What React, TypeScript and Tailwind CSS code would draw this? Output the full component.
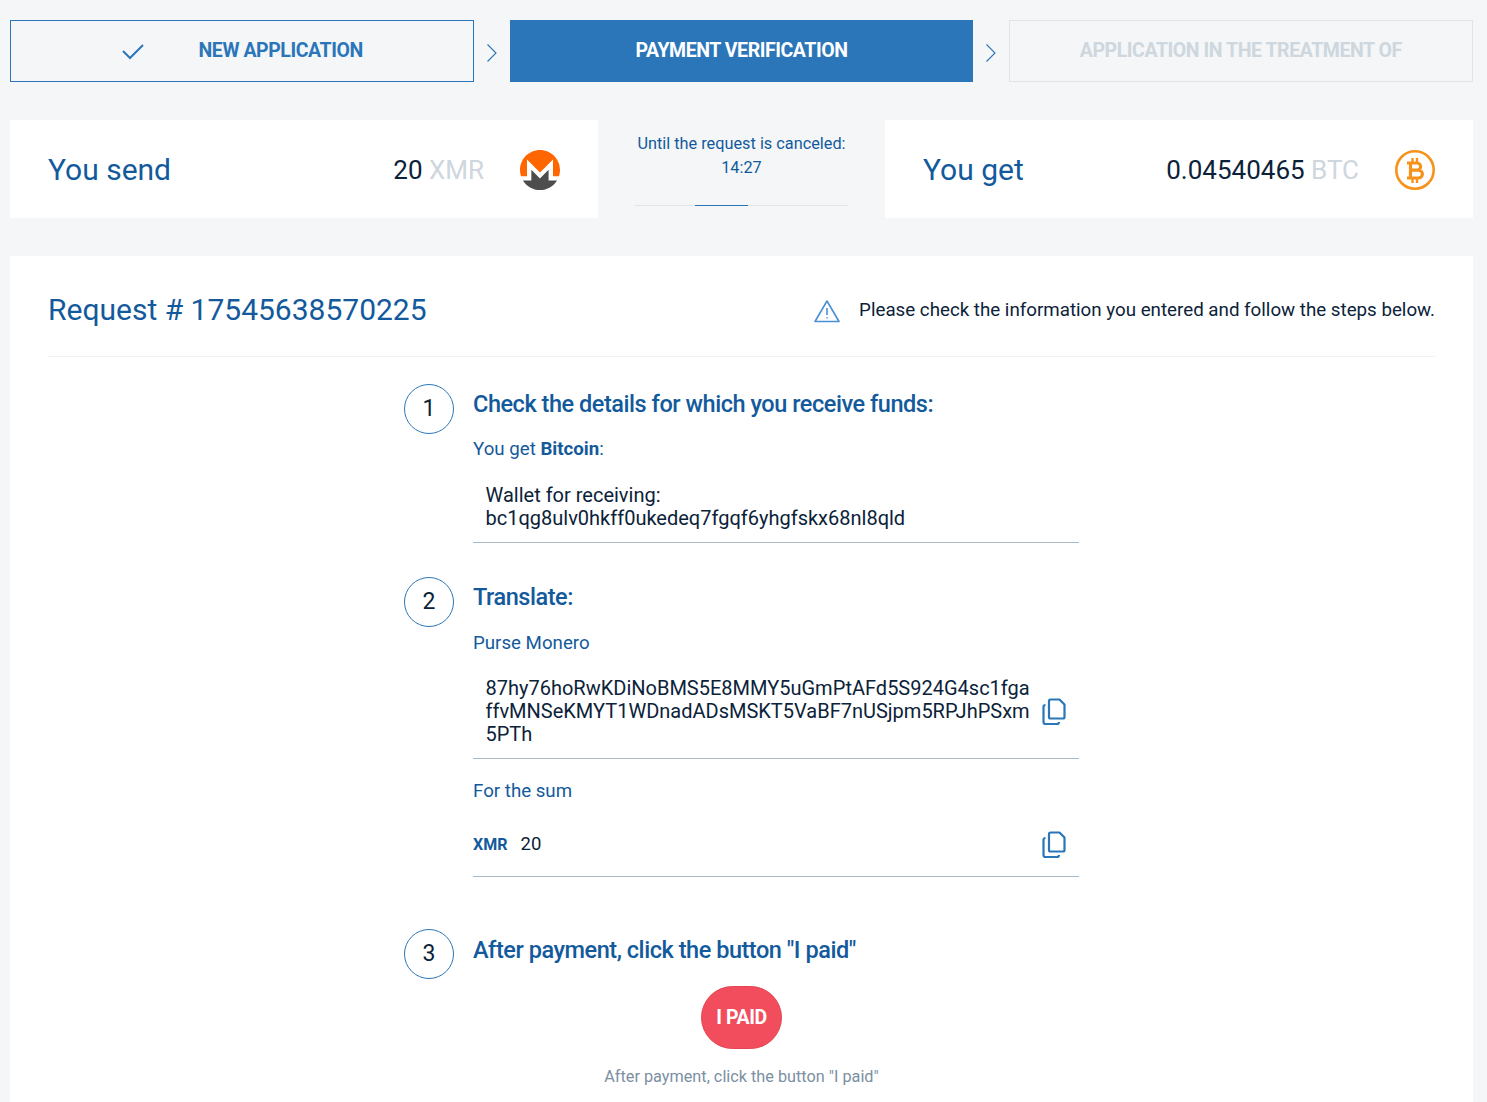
import React from "react";

const Chevron = () => (
  <div className="w-[36px] flex items-center justify-center pt-[3px]">
    <svg width="12" height="20" viewBox="0 0 12 20" fill="none" stroke="#2b76b9" strokeWidth="1.1"><path d="M1.5 1.5 L10 10 L1.5 18.5" /></svg>
  </div>
);

const Copy = () => (
  <svg width="24" height="30" viewBox="0 0 24 30" fill="none" stroke="#2b76b9" strokeWidth="2.2" strokeLinejoin="round" className="shrink-0">
    <path d="M8.5 2.5 H17.5 L22.5 7.5 V20 a1.5 1.5 0 0 1 -1.5 1.5 H8.5 a1.5 1.5 0 0 1 -1.5 -1.5 V4 a1.5 1.5 0 0 1 1.5 -1.5 Z" />
    <path d="M3.5 8 a2 2 0 0 0 -2 2 V25 a2 2 0 0 0 2 2 H15 a2 2 0 0 0 2 -2" />
  </svg>
);

const Monero = () => (
  <svg width="40" height="40" viewBox="0 0 256 256" className="shrink-0 mt-[2px]">
    <path d="M127.998 0C57.318 0 -.08 57.317.002 128c.016 14.14 2.271 27.743 6.5 40.47H44.8V60.783L128 143.98l83.2-83.2v107.69h38.303A127.9 127.9 0 0 0 256 128C256 57.317 198.68 0 128 0Z" fill="#ff6600" />
    <path d="M108.867 163.062l-36.31-36.31v67.765H44.797l-26.2.004c22.473 36.87 63.082 61.479 109.4 61.479 46.32 0 86.932-24.608 109.403-61.483h-54.497v-67.765l-36.31 36.31-18.797 18.796-18.796-18.796h-.033Z" fill="#4d4d4d" />
  </svg>
);

const Bitcoin = () => (
  <svg width="40" height="40" viewBox="0 0 40 40" fill="none" stroke="#f7931a" className="shrink-0 mt-[2px]">
    <circle cx="20" cy="20" r="18.7" strokeWidth="2.6" />
    <path strokeWidth="3.2" d="M12 13 H22 a3.6 3.6 0 0 1 0 7.2 H16 M16 20.2 H23.5 a3.9 3.9 0 0 1 0 7.8 H12 M15.5 13 V28" />
    <path strokeWidth="2.4" d="M17.5 8 V13 M22 8 V13 M17.5 28 V33 M22 28 V33" />
  </svg>
);

const Num = ({ n }: { n: number }) => (
  <div className="w-[50px] h-[50px] shrink-0 rounded-full border border-[#2b76b9] flex items-center justify-center text-[23px] text-[#0b2239]">{n}</div>
);

const H = ({ children }: { children: React.ReactNode }) => (
  <div className="text-[23.5px] leading-[28px] font-medium text-[#135a9c] tracking-[-0.46px]">{children}</div>
);

const Label = ({ children }: { children: React.ReactNode }) => (
  <div className="text-[18.7px] leading-[24px] text-[#135a9c]">{children}</div>
);

export default function App() {
  return (
    <div className="h-[1102px] overflow-hidden bg-[#f4f6f8] pt-[20px] pl-[10px] pr-[14px] font-['Roboto',sans-serif] text-[#0b2239]">
      <div className="flex h-[62px]">
        <div className="flex-1 border border-[#2b76b9] flex items-center relative justify-center text-[#2b76b9] text-[19.5px] font-bold tracking-[-0.44px]">
          <svg width="24" height="18" viewBox="0 0 24 18" fill="none" stroke="#2b76b9" strokeWidth="2" className="absolute left-[110px] top-[22px]"><path d="M2 8 L9 15 L22 2" /></svg>
          <span className="ml-[77px]">NEW APPLICATION</span>
        </div>
        <Chevron />
        <div className="flex-1 bg-[#2b76b9] flex items-center justify-center text-white text-[19.5px] font-bold tracking-[-0.44px]">PAYMENT VERIFICATION</div>
        <Chevron />
        <div className="flex-1 border border-[#dfe4e8] flex items-center justify-center text-[#ced6de] text-[19.5px] font-bold tracking-[-0.44px]">APPLICATION IN THE TREATMENT OF</div>
      </div>

      <div className="flex mt-[38px] h-[98px]">
        <div className="w-[588px] bg-white flex items-center pl-[38px] pr-[38px]">
          <span className="text-[30px] text-[#135a9c] flex-1">You send</span>
          <span className="text-[26px] mr-[36px] pt-[2px]">20 <span className="text-[#ced6de]">XMR</span></span>
          <Monero />
        </div>
        <div className="flex-1 flex flex-col items-center mx-[37px]">
          <div className="text-[16.3px] leading-[24px] text-[#135a9c] text-center mt-[12px] whitespace-nowrap">Until the request is canceled:<br />14:27</div>
          <div className="mt-[25px] w-full h-px bg-[#dfe4e8] relative">
            <div className="absolute left-[60px] top-0 h-px w-[53px] bg-[#2b76b9]" />
          </div>
        </div>
        <div className="w-[588px] bg-white flex items-center pl-[38px] pr-[38px]">
          <span className="text-[30px] text-[#135a9c] flex-1">You get</span>
          <span className="text-[26px] mr-[36px] pt-[2px]">0.04540465 <span className="text-[#ced6de]">BTC</span></span>
          <Bitcoin />
        </div>
      </div>

      <div className="mt-[38px] bg-white px-[38px] h-[900px]">
        <div className="flex items-center h-[101px] border-b border-[#f1f3f5] pt-[6px]">
          <div className="text-[30px] text-[#135a9c] flex-1">Request # 17545638570225</div>
          <svg width="26" height="24" viewBox="0 0 26 24" fill="none" stroke="#4a90d4" strokeWidth="1.6" strokeLinejoin="round" className="mr-[19px] mt-[4px]">
            <path d="M13 2 L25 22.5 H1 Z" />
            <path d="M13 9 V16" />
            <path d="M13 18.2 V19.6" />
          </svg>
          <div className="text-[18.74px] pt-[2px]">Please check the information you entered and follow the steps below.</div>
        </div>

        <div className="w-[675px] ml-[356px]">
          <div className="flex gap-[19px] pt-[27px]">
            <Num n={1} />
            <div className="flex-1">
              <H><span className="block pt-[6px]">Check the details for which you receive funds:</span></H>
              <div className="mt-[19px]"><Label>You get <b className="font-bold">Bitcoin</b>:</Label></div>
              <div className="border-b border-[#a9bbc9] mt-[23px] pl-[12.5px] pb-[12px] text-[20px] leading-[23px]">Wallet for receiving:<br />bc1qg8ulv0hkff0ukedeq7fgqf6yhgfskx68nl8qld</div>
            </div>
          </div>

          <div className="flex gap-[19px] pt-[34px]">
            <Num n={2} />
            <div className="flex-1">
              <H><span className="block pt-[6px]">Translate:</span></H>
              <div className="mt-[20px]"><Label>Purse Monero</Label></div>
              <div className="border-b border-[#a9bbc9] mt-[22px] pl-[12.5px] pr-[13.5px] pb-[12px] flex items-center gap-[11px]">
                <div className="text-[20px] leading-[23px] w-[545px] break-all">87hy76hoRwKDiNoBMS5E8MMY5uGmPtAFd5S924G4sc1fgaffvMNSeKMYT1WDnadADsMSKT5VaBF7nUSjpm5RPJhPSxm5PTh</div>
                <Copy />
              </div>
              <div className="mt-[20px]"><Label>For the sum</Label></div>
              <div className="border-b border-[#a9bbc9] mt-[27px] pb-[16px] pr-[13.5px] flex items-center">
                <span className="text-[16px] font-bold text-[#135a9c] w-[47.5px]">XMR</span>
                <span className="text-[18.5px] flex-1">20</span>
                <Copy />
              </div>
            </div>
          </div>

          <div className="flex gap-[19px] pt-[52px]">
            <Num n={3} />
            <div className="flex-1">
              <H><span className="block pt-[7px]">After payment, click the button "I paid"</span></H>
            </div>
          </div>
        </div>

        <div className="flex flex-col items-center mt-[7px]">
          <div className="w-[81px] h-[63px] rounded-full bg-[#f14d5c] border border-[#e64453] flex items-center justify-center text-white text-[19.5px] font-bold tracking-[-0.44px]">I PAID</div>
          <div className="mt-[18px] text-[16.25px] leading-[20px] text-[#7c8fa3]">After payment, click the button "I paid"</div>
        </div>
      </div>
    </div>
  );
}
